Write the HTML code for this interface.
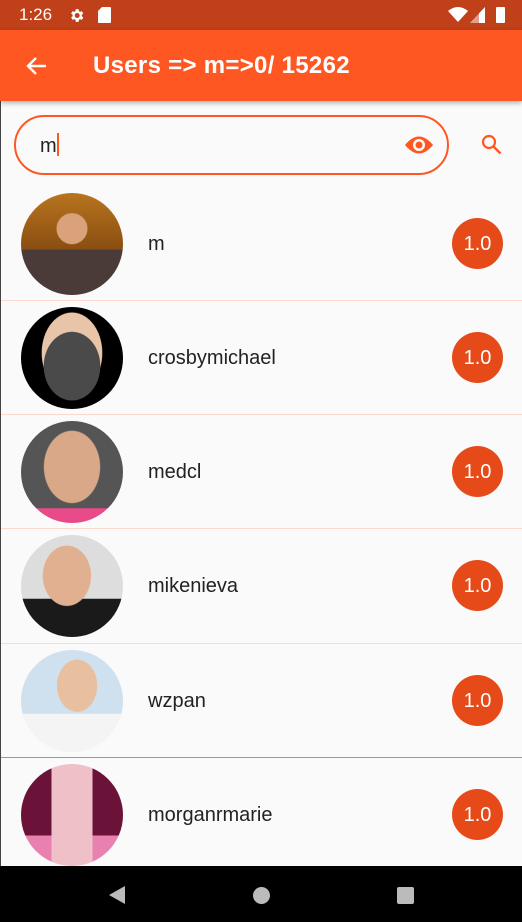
<!DOCTYPE html>
<html><head><meta charset="utf-8"><style>
body{margin:0;width:522px;height:922px;overflow:hidden;background:#fafafa;font-family:"Liberation Sans",Roboto,sans-serif;position:relative}
.sb{position:absolute;top:0;left:0;width:522px;height:30px;background:#bf4019;color:#fff;font-size:17px}
.ab{position:absolute;top:30px;left:0;width:522px;height:71px;background:#ff5722;box-shadow:0 2px 5px rgba(0,0,0,.3);z-index:2}
.ab .t{position:absolute;left:93px;top:22px;color:#fff;font-size:24px;font-weight:bold;letter-spacing:.3px}
.pill{position:absolute;left:14px;top:115px;width:431px;height:56px;border:2px solid #ff5722;border-radius:30px}
.leftline{position:absolute;left:0;top:101px;width:1px;height:765px;background:#444}
.row{position:absolute;left:1px;width:521px;height:114px}
.row .av{position:absolute;left:20px;top:7px;width:102px;height:102px;border-radius:50%;overflow:hidden}
.row .n{position:absolute;left:147px;top:47px;font-size:20px;color:#222}
.row .b{position:absolute;left:451px;top:32px;width:51px;height:51px;border-radius:50%;background:#e64a19;color:#fff;font-size:20px;text-align:center;line-height:53px}
.div{position:absolute;left:1px;width:521px;height:1px;background:#ffd8cc}
.nav{position:absolute;top:866px;left:0;width:522px;height:56px;background:#000}
</style></head><body>
<div class="sb">
<span style="position:absolute;left:19px;top:5px">1:26</span>
<svg style="position:absolute;left:68px;top:7px" width="17" height="17" viewBox="0 0 24 24"><path fill="#fff" d="M19.4 13a7.5 7.5 0 000-2l2.1-1.6-2-3.5-2.5 1a7 7 0 00-1.7-1L15 3h-4l-.4 2.9a7 7 0 00-1.7 1l-2.5-1-2 3.5L6.6 11a7.5 7.5 0 000 2l-2.2 1.6 2 3.5 2.5-1a7 7 0 001.7 1L11 21h4l.4-2.9a7 7 0 001.7-1l2.5 1 2-3.5zM13 15.5a3.5 3.5 0 110-7 3.5 3.5 0 010 7z"/></svg>
<svg style="position:absolute;left:98px;top:7px" width="13" height="16" viewBox="0 0 13 16"><path fill="#fff" d="M4 0h8a1 1 0 011 1v14a1 1 0 01-1 1H1a1 1 0 01-1-1V4z"/></svg>
<svg style="position:absolute;left:448px;top:7px" width="20" height="15" viewBox="0 0 20 15"><path fill="#fff" d="M0 4Q10-4 20 4L10 15z"/></svg>
<svg style="position:absolute;left:470px;top:7px" width="15" height="16" viewBox="0 0 15 16"><path fill="#fff" d="M15 0V16H0z"/><path fill="#bf4019" opacity=".5" d="M9 6V16H0z"/></svg>
<div style="position:absolute;left:496px;top:7px;width:9px;height:16px;background:#fff;border-radius:1px"></div>
</div>
<div class="ab">
<svg style="position:absolute;left:25px;top:24px" width="24" height="24" viewBox="0 0 24 24"><path fill="none" stroke="#fff" stroke-width="2.4" d="M21 12H4M11 4l-8 8 8 8"/></svg>
<div class="t">Users =&gt; m=&gt;0/ 15262</div>
</div>
<div class="pill"></div>
<div style="position:absolute;left:40px;top:133px;font-size:20px;color:#222">m<span style="display:inline-block;width:2px;height:23px;background:#ff5722;vertical-align:-4px"></span></div>
<svg style="position:absolute;left:404px;top:132px" width="30" height="26" viewBox="0 0 30 26"><path fill="#ff5722" d="M1 13Q15-4 29 13Q15 30 1 13z"/><circle cx="15" cy="13" r="6" fill="#fafafa"/><circle cx="15" cy="13" r="3.5" fill="#ff5722"/></svg>
<svg style="position:absolute;left:480px;top:133px" width="24" height="24" viewBox="0 0 24 24"><circle cx="9" cy="9" r="6" fill="none" stroke="#ff5722" stroke-width="2.2"/><path d="M13.5 13.5l7 7" stroke="#ff5722" stroke-width="2.4"/></svg>
<div class="leftline"></div>

<div class="row" style="top:186px"><div class="av" style="background:radial-gradient(circle at 50% 35%,#d9a27a 0 18%,transparent 19%),linear-gradient(#b8751e,#8a4e12 55%,#4a3a38 56%)"></div><div class="n">m</div><div class="b">1.0</div></div>
<div class="div" style="top:300px"></div>
<div class="row" style="top:300px"><div class="av" style="background:radial-gradient(ellipse 28% 34% at 50% 58%,#4a4a4a 0 98%,transparent 100%),radial-gradient(ellipse 30% 40% at 50% 45%,#e8c4a8 0 98%,transparent 100%),#000"></div><div class="n">crosbymichael</div><div class="b">1.0</div></div>
<div class="div" style="top:414px"></div>
<div class="row" style="top:414px"><div class="av" style="background:radial-gradient(ellipse 28% 36% at 50% 45%,#d9a888 0 97%,transparent 100%),linear-gradient(#555 0 85%,#e84a8a 86%)"></div><div class="n">medcl</div><div class="b">1.0</div></div>
<div class="div" style="top:528px"></div>
<div class="row" style="top:528px"><div class="av" style="background:radial-gradient(ellipse 24% 30% at 45% 40%,#e0b090 0 97%,transparent 100%),linear-gradient(#ddd 0 62%,#1a1a1a 63%)"></div><div class="n">mikenieva</div><div class="b">1.0</div></div>
<div class="div" style="top:643px"></div>
<div class="row" style="top:643px"><div class="av" style="background:radial-gradient(ellipse 20% 26% at 55% 35%,#e8c0a0 0 97%,transparent 100%),linear-gradient(#cfe0ef 0 62%,#f4f4f4 63%)"></div><div class="n">wzpan</div><div class="b">1.0</div></div>
<div class="div" style="top:757px;background:#999"></div>
<div class="row" style="top:757px"><div class="av" style="background:linear-gradient(90deg,transparent 30%,#f0c0c8 30% 70%,transparent 70%),linear-gradient(#6a1238 0 70%,#e880b0 70%)"></div><div class="n">morganrmarie</div><div class="b">1.0</div></div>

<div class="nav">
<svg style="position:absolute;left:107px;top:19px" width="20" height="20" viewBox="0 0 20 20"><path fill="#bbb" d="M18 1V19L2 10z"/></svg>
<div style="position:absolute;left:253px;top:21px;width:17px;height:17px;border-radius:50%;background:#bbb"></div>
<div style="position:absolute;left:397px;top:21px;width:17px;height:17px;border-radius:2px;background:#bbb"></div>
</div>
</body></html>
